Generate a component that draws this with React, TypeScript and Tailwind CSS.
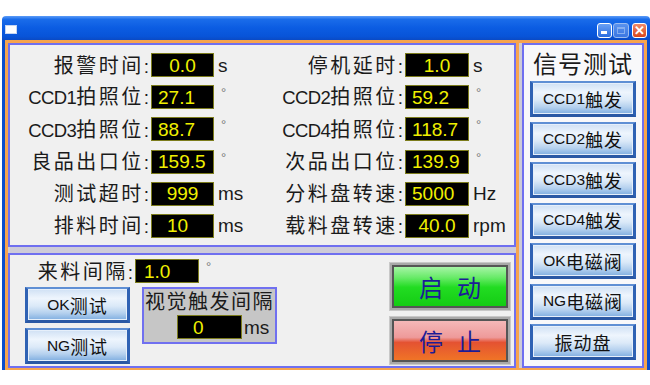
import React from 'react';

type Row = { label: string; value: string; unit: string; align: 'c' | 'l' | 'l2' };

const leftRows: Row[] = [
  { label: '报警时间', value: '0.0', unit: 's', align: 'c' },
  { label: 'CCD1拍照位', value: '27.1', unit: '°', align: 'l' },
  { label: 'CCD3拍照位', value: '88.7', unit: '°', align: 'l' },
  { label: '良品出口位', value: '159.5', unit: '°', align: 'l' },
  { label: '测试超时', value: '999', unit: 'ms', align: 'c' },
  { label: '排料时间', value: '10', unit: 'ms', align: 'l2' },
];

const rightRows: Row[] = [
  { label: '停机延时', value: '1.0', unit: 's', align: 'c' },
  { label: 'CCD2拍照位', value: '59.2', unit: '°', align: 'l' },
  { label: 'CCD4拍照位', value: '118.7', unit: '°', align: 'l' },
  { label: '次品出口位', value: '139.9', unit: '°', align: 'l' },
  { label: '分料盘转速', value: '5000', unit: 'Hz', align: 'l' },
  { label: '载料盘转速', value: '40.0', unit: 'rpm', align: 'c' },
];

const signalButtons = ['CCD1触发', 'CCD2触发', 'CCD3触发', 'CCD4触发', 'OK电磁阀', 'NG电磁阀', '振动盘'];

const alignClass = {
  c: 'justify-center',
  l: 'pl-[6px]',
  l2: 'pl-[15px]',
};

const Mixed = ({ text, latin, cjk }: { text: string; latin: string; cjk: string }) => {
  const parts = text.match(/[\x00-\x7f]+|[^\x00-\x7f]+/g) ?? [];
  return (
    <>
      {parts.map((p, i) => (
        <span key={i} className={/^[\x00-\x7f]+$/.test(p) ? latin : cjk}>
          {p}
        </span>
      ))}
    </>
  );
};

const ValueBox = ({ value, align, className = '' }: { value: string; align: Row['align']; className?: string }) => (
  <div
    className={`h-[24px] bg-black border border-[#7c7c1c] flex items-center text-[19px] leading-none text-[#f0f000] font-['Liberation_Sans',sans-serif] ${alignClass[align]} ${className}`}
  >
    {value}
  </div>
);

const Unit = ({ unit }: { unit: string }) =>
  unit === '°' ? (
    <span className="self-start ml-[7px] mt-[1px] text-[13px] leading-none text-[#777] font-['Liberation_Sans',sans-serif]">°</span>
  ) : (
    <span className="ml-[4px] text-[19px] leading-none text-[#1a1a1a] font-['Liberation_Sans',sans-serif]">{unit}</span>
  );

const Label = ({ text, width }: { text: string; width: string }) => (
  <div className={`${width} text-right whitespace-nowrap leading-none text-[#1a1a1a]`}>
    <Mixed
      text={text}
      latin="text-[18.5px] tracking-[-0.6px] font-['Liberation_Sans',sans-serif]"
      cjk="text-[20px] tracking-[2.5px] font-['Noto_Sans_CJK_SC',sans-serif]"
    />
    <span className="text-[19px] font-['Liberation_Sans',sans-serif]">:</span>
  </div>
);

const ParamColumn = ({ rows, labelWidth, boxWidth, className }: { rows: Row[]; labelWidth: string; boxWidth: string; className: string }) => (
  <div className={`flex flex-col gap-[8.2px] ${className}`}>
    {rows.map((r) => (
      <div key={r.label} className="h-[24px] flex items-center">
        <Label text={r.label} width={labelWidth} />
        <ValueBox value={r.value} align={r.align} className={`ml-[2px] ${boxWidth}`} />
        <Unit unit={r.unit} />
      </div>
    ))}
  </div>
);

const BlueButton = ({ text, className }: { text: string; className: string }) => (
  <div
    className={`flex items-center justify-center border-x-[3px] border-t-2 border-b-[3px] border-x-[#2f62b4] border-t-[#5f8fd4] border-b-[#2a58a4] bg-[linear-gradient(to_bottom,#cfe0f4_0%,#eef5fd_30%,#dbe9f8_55%,#b4d0ee_78%,#7eade0_100%)] shadow-[inset_0_0_0_1px_#e6effa] text-[#111] leading-none whitespace-nowrap ${className}`}
  >
    <Mixed
      text={text}
      latin="text-[15.5px] font-['Liberation_Sans',sans-serif]"
      cjk="text-[18px] tracking-[1px] font-['Noto_Sans_CJK_SC',sans-serif]"
    />
  </div>
);

const BigButton = ({ chars, fill }: { chars: [string, string]; fill: string }) => (
  <div className="w-[122px] h-[49px] p-[3px] bg-[#a9a9a9] shadow-[inset_0_0_0_1px_#c8c8c8]">
    <div className={`w-full h-full border-2 border-[#555] flex items-center justify-center gap-[14px] text-[24px] leading-none text-[#1c1c96] font-['Noto_Sans_CJK_SC',sans-serif] ${fill}`}>
      <span>{chars[0]}</span>
      <span>{chars[1]}</span>
    </div>
  </div>
);

export default function App() {
  return (
    <div className="w-[650px] h-[385px] bg-white pt-[16px] pl-[2px] overflow-hidden">
      <div className="w-[648px] h-[354px] flex flex-col">
        {/* title bar */}
        <div className="h-[24px] flex items-center rounded-t-[4px] bg-[linear-gradient(to_bottom,#5c9cf8_0%,#1a6cea_14%,#0b5ce2_50%,#0854d8_85%,#0a4ac4_100%)]">
          <div className="ml-[3px] mt-[2px] w-[12px] h-[9px] bg-white border border-[#c6d6f2]" />
          <div className="flex-1" />
          <div className="mt-[4px] mr-[3px] flex">
            <div className="relative w-[15px] h-[15px] rounded-[3px] border border-white bg-[linear-gradient(to_bottom,#6aa0f4,#2a6ce0)]">
              <div className="absolute left-[3px] bottom-[3px] w-[6px] h-[3px] bg-white" />
            </div>
            <div className="ml-[1px] relative w-[16px] h-[15px] rounded-[3px] border border-[#9cbcf0] bg-[linear-gradient(to_bottom,#5a92ee,#3a76e2)]">
              <div className="absolute left-[3px] top-[3px] w-[8px] h-[7px] border border-[#86aef0] border-t-2" />
            </div>
            <div className="ml-[3px] w-[15px] h-[15px] rounded-[3px] border border-white bg-[linear-gradient(to_bottom,#f08a6a,#d8461c)] flex items-center justify-center text-white text-[13px] leading-none font-bold font-['Liberation_Sans',sans-serif]">
              ✕
            </div>
          </div>
        </div>

        {/* client area */}
        <div className="flex-1 border-x-[3px] border-[#0a4ccc]">
          <div className="h-full border-[3px] border-b-2 border-[#f7a44d] bg-[#cdcbd8] flex">
            <div className="w-[508px] flex flex-col">
              {/* parameters */}
              <div className="h-[204px] border-2 border-[#6f6ff0] bg-[#f0f0f0] flex pt-[8px]">
                <ParamColumn rows={leftRows} labelWidth="w-[139px]" boxWidth="w-[63px]" className="w-[253px]" />
                <ParamColumn rows={rightRows} labelWidth="w-[140px]" boxWidth="w-[64px]" className="flex-1" />
              </div>
              <div className="h-[6px]" />
              {/* controls */}
              <div className="h-[115px] border-2 border-[#6f6ff0] bg-[#f0f0f0] flex">
                <div className="flex flex-col pt-[4px]">
                  <div className="h-[24px] flex items-center">
                    <Label text="来料间隔" width="w-[123px]" />
                    <ValueBox value="1.0" align="l" className="ml-[2px] w-[64px] pl-[8px]" />
                    <Unit unit="°" />
                  </div>
                  <div className="mt-[4px] flex items-start">
                    <div className="ml-[15px] flex flex-col gap-[5px]">
                      <BlueButton text="OK测试" className="w-[105px] h-[36px]" />
                      <BlueButton text="NG测试" className="w-[105px] h-[36px]" />
                    </div>
                    <div className="ml-[12px] w-[135px] h-[57px] border-2 border-[#7070f0] bg-[#c6c6c6] flex flex-col">
                      <div className="h-[24px] flex items-center justify-center text-[20px] tracking-[1.5px] leading-none text-[#1a1a1a] font-['Noto_Sans_CJK_SC',sans-serif] whitespace-nowrap">
                        视觉触发间隔
                      </div>
                      <div className="mt-[2px] ml-[33px] flex items-center">
                        <ValueBox value="0" align="l2" className="w-[65px]" />
                        <span className="ml-[2px] text-[19px] leading-none text-[#1a1a1a] font-['Liberation_Sans',sans-serif]">ms</span>
                      </div>
                    </div>
                  </div>
                </div>
                <div className="ml-auto mr-[3px] pt-[7px] flex flex-col gap-[5px]">
                  <BigButton
                    chars={['启', '动']}
                    fill="bg-[linear-gradient(to_bottom,#a6f4a6_0%,#66ea66_28%,#22dc22_52%,#14cc14_100%)]"
                  />
                  <BigButton
                    chars={['停', '止']}
                    fill="bg-[linear-gradient(to_bottom,#f5b8b8_0%,#ee9a9a_42%,#e45232_55%,#f07426_100%)]"
                  />
                </div>
              </div>
            </div>
            {/* splitter */}
            <div className="w-[6px] flex">
              <div className="w-[3px] bg-[#f7a44d]" />
            </div>
            {/* signal test */}
            <div className="w-[122px] border-2 border-[#6f6ff0] bg-[#f8f8fa] flex flex-col">
              <div className="h-[35px] flex items-center justify-center text-[24px] tracking-[1px] leading-none text-[#1a1a1a] font-['Noto_Sans_CJK_SC',sans-serif]">
                信号测试
              </div>
              <div className="mt-[1px] flex flex-col items-center gap-[4.5px]">
                {signalButtons.map((b) => (
                  <BlueButton key={b} text={b} className="w-[106px] h-[36px]" />
                ))}
              </div>
            </div>
          </div>
        </div>
      </div>
    </div>
  );
}
